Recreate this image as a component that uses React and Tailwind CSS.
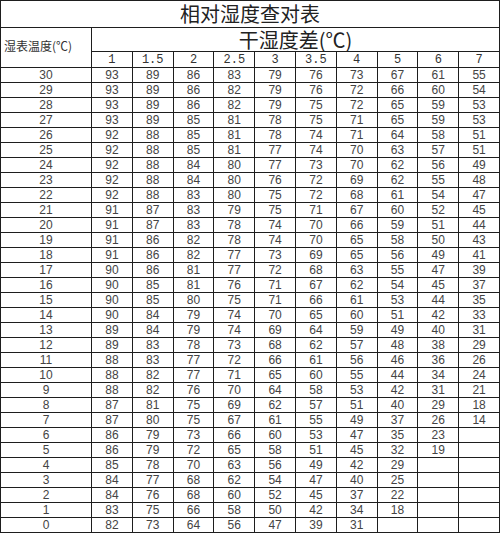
import React from 'react'

// 相对湿度查对表 — wet bulb temp rows vs dry/wet difference columns
const diffs = ['1', '1.5', '2', '2.5', '3', '3.5', '4', '5', '6', '7']

const rows = [
  [30, 93, 89, 86, 83, 79, 76, 73, 67, 61, 55],
  [29, 93, 89, 86, 82, 79, 76, 72, 66, 60, 54],
  [28, 93, 89, 86, 82, 79, 75, 72, 65, 59, 53],
  [27, 93, 89, 85, 81, 78, 75, 71, 65, 59, 53],
  [26, 92, 88, 85, 81, 78, 74, 71, 64, 58, 51],
  [25, 92, 88, 85, 81, 77, 74, 70, 63, 57, 51],
  [24, 92, 88, 84, 80, 77, 73, 70, 62, 56, 49],
  [23, 92, 88, 84, 80, 76, 72, 69, 62, 55, 48],
  [22, 92, 88, 83, 80, 75, 72, 68, 61, 54, 47],
  [21, 91, 87, 83, 79, 75, 71, 67, 60, 52, 45],
  [20, 91, 87, 83, 78, 74, 70, 66, 59, 51, 44],
  [19, 91, 86, 82, 78, 74, 70, 65, 58, 50, 43],
  [18, 91, 86, 82, 77, 73, 69, 65, 56, 49, 41],
  [17, 90, 86, 81, 77, 72, 68, 63, 55, 47, 39],
  [16, 90, 85, 81, 76, 71, 67, 62, 54, 45, 37],
  [15, 90, 85, 80, 75, 71, 66, 61, 53, 44, 35],
  [14, 90, 84, 79, 74, 70, 65, 60, 51, 42, 33],
  [13, 89, 84, 79, 74, 69, 64, 59, 49, 40, 31],
  [12, 89, 83, 78, 73, 68, 62, 57, 48, 38, 29],
  [11, 88, 83, 77, 72, 66, 61, 56, 46, 36, 26],
  [10, 88, 82, 77, 71, 65, 60, 55, 44, 34, 24],
  [9, 88, 82, 76, 70, 64, 58, 53, 42, 31, 21],
  [8, 87, 81, 75, 69, 62, 57, 51, 40, 29, 18],
  [7, 87, 80, 75, 67, 61, 55, 49, 37, 26, 14],
  [6, 86, 79, 73, 66, 60, 53, 47, 35, 23, ''],
  [5, 86, 79, 72, 65, 58, 51, 45, 32, 19, ''],
  [4, 85, 78, 70, 63, 56, 49, 42, 29, '', ''],
  [3, 84, 77, 68, 62, 54, 47, 40, 25, '', ''],
  [2, 84, 76, 68, 60, 52, 45, 37, 22, '', ''],
  [1, 83, 75, 66, 58, 50, 42, 34, 18, '', ''],
  [0, 82, 73, 64, 56, 47, 39, 31, '', '', ''],
]

const cjk = "font-['Noto_Sans_CJK_SC',sans-serif]"

export default function App() {
  return (
    <div className="w-[500px] h-[534px] bg-white overflow-hidden">
      <div className="grid grid-cols-[90px_repeat(10,1fr)] grid-rows-[26px_23px_15px_repeat(31,14px)] gap-px p-px bg-[#1e1e1e] w-[500px]">
        <div className={`col-span-11 bg-white flex items-center justify-center text-[20px] leading-none text-[#222] ${cjk}`}>
          相对湿度查对表
        </div>
        <div className={`row-span-2 bg-white flex items-center pl-[3px] pb-[3px] text-[12px] leading-none text-[#333] ${cjk}`}>
          湿表温度(℃)
        </div>
        <div className={`col-span-10 bg-white flex items-center justify-center text-[20px] leading-none text-[#222] ${cjk}`}>
          干湿度差(℃)
        </div>
        {diffs.map((d) => (
          <div key={d} className="bg-white flex items-center justify-center text-[12px] leading-none text-[#333] font-['Liberation_Mono',monospace]">
            {d}
          </div>
        ))}
        {rows.map((r) =>
          r.map((v, i) => (
            <div key={r[0] + '-' + i} className="bg-white flex items-center justify-center text-[12px] leading-none text-[#444] font-['Liberation_Sans',sans-serif]">
              {v}
            </div>
          ))
        )}
      </div>
    </div>
  )
}
